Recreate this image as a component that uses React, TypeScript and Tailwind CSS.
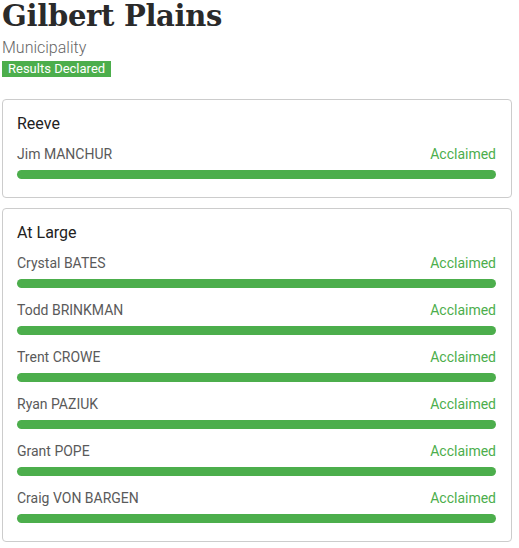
import React from "react";

const races = [
  { title: "Reeve", candidates: ["Jim MANCHUR"] },
  {
    title: "At Large",
    candidates: [
      "Crystal BATES",
      "Todd BRINKMAN",
      "Trent CROWE",
      "Ryan PAZIUK",
      "Grant POPE",
      "Craig VON BARGEN",
    ],
  },
];

export default function App() {
  return (
    <div className="w-[519px] bg-white px-[2px] pb-[5px]" style={{ fontFamily: "Roboto, sans-serif" }}>
      <h1
        className="text-[29px] leading-[32px] font-bold text-[#2a2a2a] tracking-[-0.3px]"
        style={{ fontFamily: '"DejaVu Serif", serif' }}
      >
        Gilbert Plains
      </h1>
      <div className="mt-[6px] text-[16px] leading-[20px] text-[#666] font-light">Municipality</div>
      <div className="mt-[3px] w-fit bg-[#4cae4c] text-white text-[13px] leading-[16px] px-[6px]">Results Declared</div>

      <div className="mt-[22px] flex flex-col gap-[10px] w-[510px]">
        {races.map((race) => (
          <div key={race.title} className="border border-[#cccccc] rounded-[4px] pt-[12px] pb-[18px] pl-[14px] pr-[15px]">
            <h2 className="text-[16px] leading-[24px] font-normal text-[#222]">{race.title}</h2>
            <div className="mt-[8px] flex flex-col gap-[12px]">
              {race.candidates.map((name) => (
                <div key={name}>
                  <div className="flex justify-between text-[14px] leading-[20px]">
                    <span className="text-[#5a5a5a]">{name}</span>
                    <span className="text-[#4cae4c]">Acclaimed</span>
                  </div>
                  <div className="mt-[6px] h-[9px] rounded-full bg-[#4cae4c]" />
                </div>
              ))}
            </div>
          </div>
        ))}
      </div>
    </div>
  );
}
